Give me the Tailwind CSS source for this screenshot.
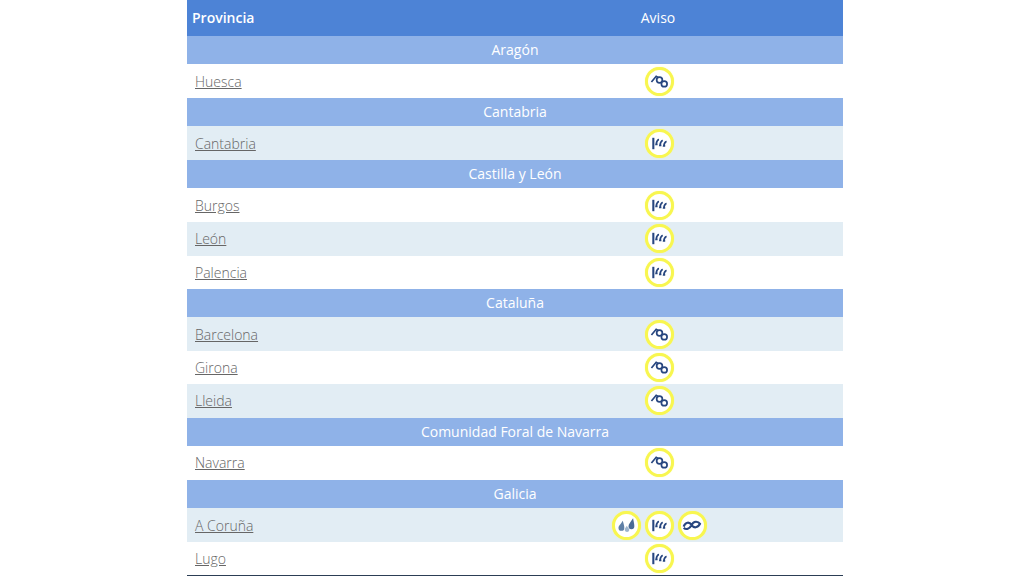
<!doctype html>
<html lang="es">
<head>
<meta charset="UTF-8" />
<title>Avisos por provincia</title>
<script src="https://cdn.jsdelivr.net/npm/@tailwindcss/browser@4"></script>
</head>
<body class="bg-white font-['Open_Sans',sans-serif] overflow-hidden">
<svg class="hidden">
  <symbol id="aludes" viewBox="0 0 20 20"><path d="M1.500 10.500 L6.500 4.500 L9 6" fill="none" stroke="#27467f" stroke-width="1.800"/><circle cx="10" cy="8.500" r="3" fill="#fff" stroke="#27467f" stroke-width="1.800"/><circle cx="15" cy="12.500" r="3" fill="#fff" stroke="#27467f" stroke-width="1.800"/></symbol>
  <symbol id="viento" viewBox="0 0 20 20"><path d="M3.500 4 V16" stroke="#27467f" stroke-width="2.200"/><path d="M9.500 6 C7.500 6 7 8 6.500 11 H8 M13.500 7 C11.500 7 11 9 10.500 12 H12 M17.500 8 C15.500 8 15 10 14.500 12.500 H16" fill="none" stroke="#27467f" stroke-width="1.900"/></symbol>
  <symbol id="lluvia" viewBox="0 0 24 20"><path d="M8 5 C6 9 3 11 3 13.500 A3.500 3.500 0 0 0 10 13.500 C10 11 9 8 8 5Z" fill="#5f7fa6"/><path d="M13 11 C12 13 10.500 14 10.500 16 A2.800 2.800 0 0 0 16 16 C16 14.500 14 13 13 11Z" fill="#9db4cd"/><path d="M20.500 2 C18 6 15 9 15 11.500 A3.500 3.500 0 0 0 22 11.500 C22 8.500 21 5 20.500 2Z" fill="#4a6a95"/></symbol>
  <symbol id="costeros" viewBox="0 0 24 20"><path d="M2 12 C4 6 9 6 11.500 10 C14 14 19 14 22 8 M2 13.500 C5 16 9 15 11.500 10 C14 5 19 5 22 9" fill="none" stroke="#27467f" stroke-width="2.600"/></symbol>
</svg>
<main class="ml-[187px] w-[656px] text-[14px] text-[#666]">
  <div class="flex h-[36px] items-center bg-[#4d83d6] pb-[2px] text-white">
    <div class="w-[286px] pl-[5px] font-semibold">Provincia</div>
    <div class="flex-1 text-center">Aviso</div>
  </div>

  <div class="flex h-[28px] items-center justify-center bg-[#8fb2e8] pb-[2px] text-white">Aragón</div>
  <div class="flex h-[34px] items-center bg-white">
    <a class="w-[286px] pl-[8px] font-light underline" href="#">Huesca</a>
    <div class="flex flex-1 justify-center gap-[4px] pl-[2px]"><span class="flex size-[29px] items-center justify-center rounded-full border-[3px] border-[#f8f650] bg-white shadow-[0_0_1px_#f9f86e]"><svg class="size-[19px]"><use href="#aludes"/></svg></span></div>
  </div>

  <div class="flex h-[28px] items-center justify-center bg-[#8fb2e8] pb-[2px] text-white">Cantabria</div>
  <div class="flex h-[34px] items-center bg-[#e2edf4]">
    <a class="w-[286px] pl-[8px] font-light underline" href="#">Cantabria</a>
    <div class="flex flex-1 justify-center gap-[4px] pl-[2px]"><span class="flex size-[29px] items-center justify-center rounded-full border-[3px] border-[#f8f650] bg-white shadow-[0_0_1px_#f9f86e]"><svg class="size-[19px]"><use href="#viento"/></svg></span></div>
  </div>

  <div class="flex h-[28px] items-center justify-center bg-[#8fb2e8] pb-[2px] text-white">Castilla y León</div>
  <div class="flex h-[34px] items-center bg-white">
    <a class="w-[286px] pl-[8px] font-light underline" href="#">Burgos</a>
    <div class="flex flex-1 justify-center gap-[4px] pl-[2px]"><span class="flex size-[29px] items-center justify-center rounded-full border-[3px] border-[#f8f650] bg-white shadow-[0_0_1px_#f9f86e]"><svg class="size-[19px]"><use href="#viento"/></svg></span></div>
  </div>
  <div class="flex h-[34px] items-center bg-[#e2edf4] pb-[1px]">
    <a class="w-[286px] pl-[8px] font-light underline" href="#">León</a>
    <div class="flex flex-1 justify-center gap-[4px] pl-[2px]"><span class="flex size-[29px] items-center justify-center rounded-full border-[3px] border-[#f8f650] bg-white shadow-[0_0_1px_#f9f86e]"><svg class="size-[19px]"><use href="#viento"/></svg></span></div>
  </div>
  <div class="flex h-[33px] items-center bg-white pb-[1px]">
    <a class="w-[286px] pl-[8px] font-light underline" href="#">Palencia</a>
    <div class="flex flex-1 justify-center gap-[4px] pl-[2px]"><span class="flex size-[29px] items-center justify-center rounded-full border-[3px] border-[#f8f650] bg-white shadow-[0_0_1px_#f9f86e]"><svg class="size-[19px]"><use href="#viento"/></svg></span></div>
  </div>

  <div class="flex h-[28px] items-center justify-center bg-[#8fb2e8] pb-[2px] text-white">Cataluña</div>
  <div class="flex h-[34px] items-center bg-[#e2edf4]">
    <a class="w-[286px] pl-[8px] font-light underline" href="#">Barcelona</a>
    <div class="flex flex-1 justify-center gap-[4px] pl-[2px]"><span class="flex size-[29px] items-center justify-center rounded-full border-[3px] border-[#f8f650] bg-white shadow-[0_0_1px_#f9f86e]"><svg class="size-[19px]"><use href="#aludes"/></svg></span></div>
  </div>
  <div class="flex h-[33px] items-center bg-white">
    <a class="w-[286px] pl-[8px] font-light underline" href="#">Girona</a>
    <div class="flex flex-1 justify-center gap-[4px] pl-[2px]"><span class="flex size-[29px] items-center justify-center rounded-full border-[3px] border-[#f8f650] bg-white shadow-[0_0_1px_#f9f86e]"><svg class="size-[19px]"><use href="#aludes"/></svg></span></div>
  </div>
  <div class="flex h-[34px] items-center bg-[#e2edf4] pb-[1px]">
    <a class="w-[286px] pl-[8px] font-light underline" href="#">Lleida</a>
    <div class="flex flex-1 justify-center gap-[4px] pl-[2px]"><span class="flex size-[29px] items-center justify-center rounded-full border-[3px] border-[#f8f650] bg-white shadow-[0_0_1px_#f9f86e]"><svg class="size-[19px]"><use href="#aludes"/></svg></span></div>
  </div>

  <div class="flex h-[28px] items-center justify-center bg-[#8fb2e8] pb-[2px] text-white">Comunidad Foral de Navarra</div>
  <div class="flex h-[34px] items-center bg-white pb-[1px]">
    <a class="w-[286px] pl-[8px] font-light underline" href="#">Navarra</a>
    <div class="flex flex-1 justify-center gap-[4px] pl-[2px]"><span class="flex size-[29px] items-center justify-center rounded-full border-[3px] border-[#f8f650] bg-white shadow-[0_0_1px_#f9f86e]"><svg class="size-[19px]"><use href="#aludes"/></svg></span></div>
  </div>

  <div class="flex h-[28px] items-center justify-center bg-[#8fb2e8] pb-[2px] text-white">Galicia</div>
  <div class="flex h-[34px] items-center bg-[#e2edf4]">
    <a class="w-[286px] pl-[8px] font-light underline" href="#">A Coruña</a>
    <div class="flex flex-1 justify-center gap-[4px] pl-[2px]">
      <span class="flex size-[29px] items-center justify-center rounded-full border-[3px] border-[#f8f650] bg-white shadow-[0_0_1px_#f9f86e]"><svg class="size-[20px]"><use href="#lluvia"/></svg></span>
      <span class="flex size-[29px] items-center justify-center rounded-full border-[3px] border-[#f8f650] bg-white shadow-[0_0_1px_#f9f86e]"><svg class="size-[19px]"><use href="#viento"/></svg></span>
      <span class="flex size-[29px] items-center justify-center rounded-full border-[3px] border-[#f8f650] bg-white shadow-[0_0_1px_#f9f86e]"><svg class="size-[20px]"><use href="#costeros"/></svg></span>
    </div>
  </div>
  <div class="flex h-[35px] items-center border-b-2 border-[#2c3e55] bg-white">
    <a class="w-[286px] pl-[8px] font-light underline" href="#">Lugo</a>
    <div class="flex flex-1 justify-center gap-[4px] pl-[2px]"><span class="flex size-[29px] items-center justify-center rounded-full border-[3px] border-[#f8f650] bg-white shadow-[0_0_1px_#f9f86e]"><svg class="size-[19px]"><use href="#viento"/></svg></span></div>
  </div>
</main>
</body>
</html>
